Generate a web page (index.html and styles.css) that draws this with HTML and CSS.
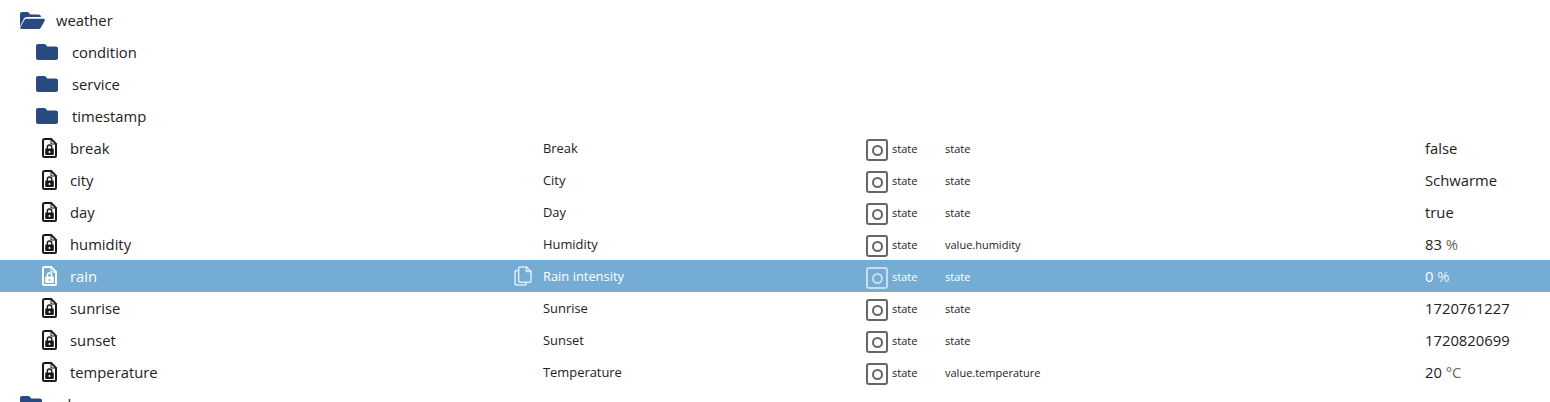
FILE: index.html
```html
<!DOCTYPE html>
<html lang="en">
<head>
  <meta charset="UTF-8">
  <title>Objects</title>
  <link rel="stylesheet" href="styles.css">
</head>
<body>
  <svg class="defs" width="0" height="0">
    <symbol id="folder-open" viewBox="0 0 25 17">
      <path d="M0 14.500V2C0 .9.900 0 2 0h6l2.500 2.500h8c1.500 0 2.500 1 2.500 2.500H7.500C5.500 5 4.200 5.800 3.400 7.500z"/>
      <path d="M6.800 6.800h16.700c1.100 0 1.700 1 1.200 2L21 15.500c-.5.900-1.400 1.500-2.500 1.500h-17c-1 0-1.500-1-1.100-1.800L4 8.500c.6-1.100 1.600-1.700 2.800-1.700z"/>
    </symbol>
    <symbol id="folder" viewBox="0 0 22 16">
      <path d="M2 0h6.200c.5 0 1 .2 1.400.6L11.400 2.400H20c1.100 0 2 .9 2 2V14c0 1.100-.9 2-2 2H2c-1.100 0-2-.9-2-2V2C0 .9.900 0 2 0z"/>
    </symbol>
    <symbol id="file-lock" viewBox="0 0 15 20">
      <path fill="none" stroke="currentColor" stroke-width="2" d="M2.500 1h6.700L14 5.800V17.500c0 .8-.7 1.500-1.500 1.500h-10C1.700 19 1 18.300 1 17.500v-15C1 1.700 1.700 1 2.500 1z"/>
      <path fill="none" stroke="currentColor" d="M9 1v5h5"/>
      <path fill="currentColor" fill-rule="evenodd" d="M4.600 10.500V9.200a2.900 2.900 0 0 1 5.800 0v1.300h.6c.4 0 .8.300.8.800v5c0 .4-.4.700-.8.700H4c-.4 0-.8-.3-.8-.7v-5c0-.5.400-.8.800-.8zm1.400 0h3V9.200a1.500 1.500 0 0 0-3 0zm1.500 2.500a1 1 0 1 0 0 2 1 1 0 0 0 0-2z"/>
    </symbol>
    <symbol id="copy" viewBox="0 0 18 20">
      <path d="M6.500 1h6L17 5.500v9c0 1-.8 1.800-1.800 1.800H6.500c-1 0-1.800-.8-1.800-1.800V2.800C4.700 1.800 5.500 1 6.500 1z"/>
      <path d="M12.500 1v4.500H17"/>
      <path d="M4.700 4.500H3C2 4.500 1 5.300 1 6.300v10.900C1 18.200 2 19 3 19h7.500c1 0 1.800-.8 1.800-1.800v-.9"/>
    </symbol>
  </svg>

  <div class="tree">
    <div class="row">
      <svg class="ic ic-open level-0"><use href="#folder-open"/></svg>
      <span class="name">weather</span>
    </div>
    <div class="row">
      <svg class="ic ic-folder level-1"><use href="#folder"/></svg>
      <span class="name">condition</span>
    </div>
    <div class="row">
      <svg class="ic ic-folder level-1"><use href="#folder"/></svg>
      <span class="name">service</span>
    </div>
    <div class="row">
      <svg class="ic ic-folder level-1"><use href="#folder"/></svg>
      <span class="name">timestamp</span>
    </div>

    <div class="row state-row">
      <div class="id-cell"><svg class="ic-file"><use href="#file-lock"/></svg><span class="name">break</span></div>
      <div class="label">Break</div>
      <div class="type"><span class="type-box"><i></i></span>state</div>
      <div class="role">state</div>
      <div class="value">false</div>
    </div>
    <div class="row state-row">
      <div class="id-cell"><svg class="ic-file"><use href="#file-lock"/></svg><span class="name">city</span></div>
      <div class="label">City</div>
      <div class="type"><span class="type-box"><i></i></span>state</div>
      <div class="role">state</div>
      <div class="value">Schwarme</div>
    </div>
    <div class="row state-row">
      <div class="id-cell"><svg class="ic-file"><use href="#file-lock"/></svg><span class="name">day</span></div>
      <div class="label">Day</div>
      <div class="type"><span class="type-box"><i></i></span>state</div>
      <div class="role">state</div>
      <div class="value">true</div>
    </div>
    <div class="row state-row">
      <div class="id-cell"><svg class="ic-file"><use href="#file-lock"/></svg><span class="name">humidity</span></div>
      <div class="label">Humidity</div>
      <div class="type"><span class="type-box"><i></i></span>state</div>
      <div class="role">value.humidity</div>
      <div class="value">83 <span class="unit">%</span></div>
    </div>
    <div class="row state-row selected">
      <div class="id-cell"><svg class="ic-file"><use href="#file-lock"/></svg><span class="name">rain</span><svg class="ic-copy"><use href="#copy"/></svg></div>
      <div class="label">Rain intensity</div>
      <div class="type"><span class="type-box"><i></i></span>state</div>
      <div class="role">state</div>
      <div class="value">0 <span class="unit">%</span></div>
    </div>
    <div class="row state-row">
      <div class="id-cell"><svg class="ic-file"><use href="#file-lock"/></svg><span class="name">sunrise</span></div>
      <div class="label">Sunrise</div>
      <div class="type"><span class="type-box"><i></i></span>state</div>
      <div class="role">state</div>
      <div class="value">1720761227</div>
    </div>
    <div class="row state-row">
      <div class="id-cell"><svg class="ic-file"><use href="#file-lock"/></svg><span class="name">sunset</span></div>
      <div class="label">Sunset</div>
      <div class="type"><span class="type-box"><i></i></span>state</div>
      <div class="role">state</div>
      <div class="value">1720820699</div>
    </div>
    <div class="row state-row">
      <div class="id-cell"><svg class="ic-file"><use href="#file-lock"/></svg><span class="name">temperature</span></div>
      <div class="label">Temperature</div>
      <div class="type"><span class="type-box"><i></i></span>state</div>
      <div class="role">value.temperature</div>
      <div class="value">20 <span class="unit">°C</span></div>
    </div>
    <div class="row">
      <svg class="ic ic-closed level-0"><use href="#folder"/></svg>
      <span class="name">wh</span>
    </div>
  </div>
</body>
</html>
```

FILE: styles.css
```css
html, body {
  height: 100%;
  overflow: hidden;
}

body {
  margin: 0;
  background: #fff;
  color: #222;
  font-family: "Open Sans", "Noto Sans", Arial, sans-serif;
  font-size: 14.800px;
}

.defs {
  display: block;
  height: 0;
}

.tree {
  padding-top: 4px;
}

.row {
  display: flex;
  align-items: center;
  height: 32px;
}

.ic {
  flex: none;
  fill: #294a7e;
}

.ic-open {
  width: 25px;
  height: 17px;
  margin-right: 11px;
}

.ic-closed,
.ic-folder {
  width: 22px;
  height: 16px;
  margin-right: 14px;
}

.level-0 {
  margin-left: 20px;
}

.level-1 {
  margin-left: 36px;
}

.state-row {
  display: grid;
  grid-template-columns: 543px 323px 79px 480px 1fr;
}

.id-cell {
  display: flex;
  align-items: center;
  align-self: stretch;
  position: relative;
  padding-left: 42px;
}

.ic-file {
  flex: none;
  width: 15px;
  height: 20px;
  margin-right: 13px;
  color: #1a1a1a;
}

.label {
  font-size: 12.900px;
}

.type {
  display: flex;
  align-items: center;
  padding-top: 1px;
  font-size: 11px;
}

.type-box {
  display: flex;
  align-items: center;
  justify-content: center;
  box-sizing: border-box;
  width: 22px;
  height: 22px;
  margin-top: 3px;
  margin-right: 4px;
  border: 2px solid #666;
  border-radius: 3px;
}

.type-box i {
  display: block;
  box-sizing: border-box;
  width: 11px;
  height: 11px;
  border: 2px solid #666;
  border-radius: 50%;
}

.role {
  padding-top: 1px;
  font-size: 11px;
}

.unit {
  color: #666;
}

.selected {
  background: #75acd4;
  color: #fff;
}

.selected .ic-file {
  color: #fff;
}

.selected .type-box,
.selected .type-box i {
  border-color: rgba(255, 255, 255, 0.6);
}

.selected .unit {
  color: rgba(255, 255, 255, 0.85);
}

.ic-copy {
  position: absolute;
  left: 514px;
  top: 6px;
  width: 18px;
  height: 20px;
  fill: none;
  stroke: rgba(255, 255, 255, 0.75);
  stroke-width: 1.500;
}
```
